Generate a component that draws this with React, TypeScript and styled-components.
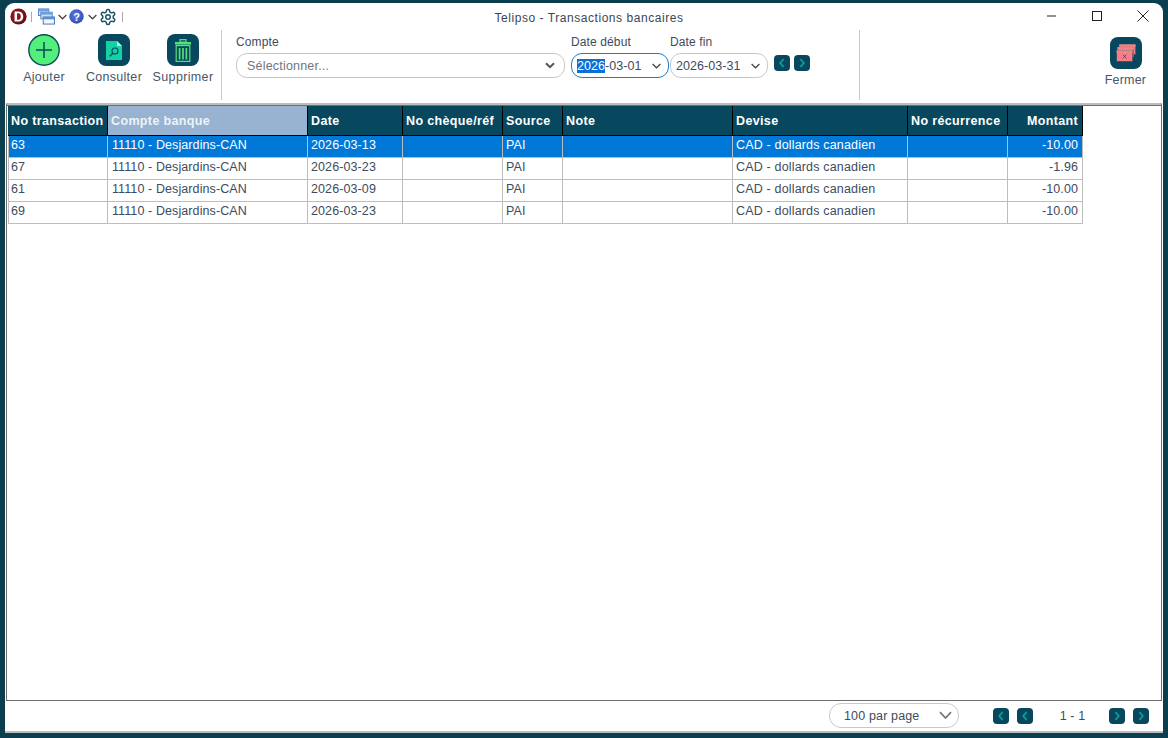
import React from "react";
import styled, { createGlobalStyle } from "styled-components";

const Global = createGlobalStyle`
  html, body { margin: 0; padding: 0; width: 100%; height: 100%; overflow: hidden; background: #0b3f50; }
  #root { width: 100%; height: 100%; }
  * { box-sizing: border-box; }
`;

const Frame = styled.div`
  width: 1168px;
  height: 738px;
  padding: 3px 5px 5px 5px;
  background: #0b3f50;
  font-family: "Liberation Sans", Arial, sans-serif;
`;
const Win = styled.div`
  width: 1158px;
  height: 730px;
  background: #fff;
  border-radius: 9px 9px 0 0;
  display: flex;
  flex-direction: column;
  position: relative;
`;
const TitleBar = styled.div`
  height: 23px;
  display: flex;
  align-items: center;
  padding: 4px 0 0 5px;
  position: relative;
`;
const QuickIcons = styled.div`
  display: flex;
  align-items: center;
  height: 19px;
`;
const Sep = styled.span`
  width: 1px;
  height: 10px;
  background: #a9a9a9;
  display: block;
`;
const Title = styled.div`
  position: absolute;
  left: 0;
  right: 0;
  top: 7px;
  padding-left: 10px;
  text-align: center;
  font-size: 12px;
  line-height: 16px;
  letter-spacing: 0.55px;
  color: #3b4658;
`;
const WinControls = styled.div`
  position: absolute;
  right: -2px;
  top: 0;
  display: flex;
`;
const WinBtn = styled.div`
  width: 45px;
  height: 26px;
  display: flex;
  align-items: center;
  justify-content: center;
`;
const WinCloseBtn = styled(WinBtn)`
  width: 46px;
  padding-left: 1px;
`;
const Toolbar = styled.div`
  height: 77px;
  display: flex;
  align-items: flex-start;
`;
const ActionGroup = styled.div`
  width: 217px;
  height: 70px;
  padding: 4px 0 0 4px;
  border-right: 1px solid #c8c8c8;
  display: flex;
  margin-top: 4px;
`;
const Action = styled.div<{ $w: number }>`
  width: ${(p) => p.$w}px;
  display: flex;
  flex-direction: column;
  align-items: center;
  font-size: 12.5px;
  line-height: 15px;
  letter-spacing: 0.3px;
  color: #4a5568;
  gap: 4px;
`;
const WideAction = styled(Action)`
  letter-spacing: 0.35px;
  padding-right: 2px;
`;
const Tile = styled.div`
  width: 32px;
  height: 32px;
  border-radius: 8px;
  background: #07485f;
  display: flex;
  align-items: center;
  justify-content: center;
`;
const Filters = styled.div`
  width: 638px;
  height: 70px;
  margin-top: 4px;
  padding: 4px 0 0 14px;
  border-right: 1px solid #c8c8c8;
  display: flex;
  align-items: flex-start;
`;
const Field = styled.div<{ $w: number }>`
  width: ${(p) => p.$w}px;
  display: flex;
  flex-direction: column;
`;
const FieldLabel = styled.div`
  height: 17px;
  font-size: 12px;
  line-height: 17px;
  letter-spacing: 0.12px;
  color: #404b60;
`;
const Select = styled.div<{ $focus?: boolean; $w: number }>`
  margin-top: 2px;
  width: ${(p) => p.$w}px;
  height: 25px;
  border-radius: 11px;
  border: 1px solid ${(p) => (p.$focus ? "#1a7fd4" : "#c8c8c8")};
  background: #fff;
  display: flex;
  align-items: center;
  justify-content: space-between;
  font-size: 12.5px;
  letter-spacing: 0.05px;
  color: #404b60;
`;
const Placeholder = styled.span`
  padding-left: 10px;
  letter-spacing: 0.2px;
  color: #6f7680;
`;
const DateText = styled.span`
  padding-left: 5px;
`;
const Selected = styled.span`
  background: #0a6fd6;
  color: #fff;
`;
const ChevBox = styled.span<{ $r: number }>`
  display: flex;
  padding-right: ${(p) => p.$r}px;
`;
const Stepper = styled.div`
  display: flex;
  gap: 4px;
  margin: 21px 0 0 6px;
`;
const NavBtn = styled.div`
  width: 16px;
  height: 16px;
  border-radius: 4px;
  background: #07485f;
  display: flex;
  align-items: center;
  justify-content: center;
`;
const Spacer = styled.div`
  flex: 1;
`;
const CloseAction = styled(Action)`
  margin: 11px 0 0 0;
  padding-right: 5px;
  letter-spacing: 0.2px;
  & > :last-child { margin-right: 0; }
`;
const CloseLabel = styled.span`
  margin-right: 2px;
`;
const GridArea = styled.div`
  flex: 1;
  min-height: 0;
  border-top: 2px solid #bdbdbd;
  border-bottom: 1px solid #6f6f6f;
  border-left: 1px solid #6f6f6f;
  border-right: 1px solid #6f6f6f;
  margin: 0 1px 0 1px;
  padding: 1px 0 0 1px;
  box-shadow: inset 0 1px 0 #6f6f6f;
`;
const Table = styled.div`
  display: grid;
  grid-template-columns: 100px 200px 95px 100px 60px 170px 175px 100px 75px;
  grid-auto-rows: 22px;
  grid-template-rows: 30px;
  width: 1075px;
`;
const Head = styled.div<{ $active?: boolean; $right?: boolean }>`
  background: ${(p) => (p.$active ? "#97b3d1" : "#07485f")};
  color: ${(p) => (p.$active ? "#eef2f7" : "#fff")};
  border-right: 1px solid #000;
  border-bottom: 1px solid #000;
  font-size: 12.5px;
  font-weight: bold;
  letter-spacing: 0.36px;
  line-height: 30px;
  padding: 0 4px 0 3px;
  white-space: nowrap;
  overflow: hidden;
  text-align: ${(p) => (p.$right ? "right" : "left")};
`;
const Cell = styled.div<{ $sel?: boolean; $right?: boolean }>`
  background: ${(p) => (p.$sel ? "#0078d7" : "#fff")};
  color: ${(p) => (p.$sel ? "#fff" : "#404b60")};
  border-right: 1px solid #bdbdbd;
  border-bottom: 1px solid #bdbdbd;
  font-size: 12.5px;
  letter-spacing: 0.1px;
  line-height: 19px;
  padding: 0 4px 0 4px;
  white-space: nowrap;
  overflow: hidden;
  text-align: ${(p) => (p.$right ? "right" : "left")};
`;
const PlainCell = styled(Cell)`
  padding-left: 3px;
`;
const DeviseCell = styled(PlainCell)`
  letter-spacing: 0.17px;
`;
const FirstCell = styled(Cell)`
  border-left: 1px solid #bdbdbd;
  padding-left: 2px;
`;
const Footer = styled.div`
  height: 32px;
  display: flex;
  align-items: center;
  justify-content: flex-end;
  padding: 0 14px 1px 0;
  font-size: 12.5px;
  color: #404b60;
  border-bottom: 2px solid #bdbdbd;
`;
const PageSize = styled.div`
  width: 130px;
  height: 25px;
  border: 1px solid #c8c8c8;
  border-radius: 12px;
  display: flex;
  align-items: center;
  justify-content: space-between;
  padding: 0 6px 0 14px;
  letter-spacing: 0.15px;
  margin-right: 34px;
`;
const PagerGroup = styled.div`
  display: flex;
  gap: 8px;
`;
const PageLabel = styled.div`
  width: 76px;
  padding-left: 3px;
  text-align: center;
  letter-spacing: 0.1px;
`;

const ChevLeft = () => (
  <svg width="10" height="10" viewBox="0 0 10 10" fill="none">
    <path d="M6.6 1.2 L3.2 5 L6.6 8.8" stroke="#0f9a92" strokeWidth="1.8" />
  </svg>
);
const ChevRight = () => (
  <svg width="10" height="10" viewBox="0 0 10 10" fill="none">
    <path d="M3.4 1.2 L6.8 5 L3.4 8.8" stroke="#0f9a92" strokeWidth="1.8" />
  </svg>
);
const DownThin = () => (
  <svg width="9" height="6" viewBox="0 0 9 6" fill="none">
    <path d="M0.6 1 L4.5 4.8 L8.4 1" stroke="#444" strokeWidth="1.2" />
  </svg>
);
const DownBold = () => (
  <svg width="10" height="7" viewBox="0 0 10 7" fill="none">
    <path d="M1 1.2 L5 5.2 L9 1.2" stroke="#555" strokeWidth="2" />
  </svg>
);
const DownWide = () => (
  <svg width="13" height="9" viewBox="0 0 13 9" fill="none">
    <path d="M1 1.2 L6.5 7 L12 1.2" stroke="#777" strokeWidth="1.8" />
  </svg>
);

const LogoIcon = () => (
  <svg width="17" height="17" viewBox="0 0 18 18" style={{ marginRight: 4 }}>
    <defs>
      <radialGradient id="logoFill" cx="0.4" cy="0.4" r="0.7">
        <stop offset="0" stopColor="#a51622" />
        <stop offset="1" stopColor="#5c0c14" />
      </radialGradient>
    </defs>
    <circle cx="9" cy="9" r="8.6" fill="url(#logoFill)" />
    <path d="M4.8 3.6 H9 C12.8 3.6 14 6.6 14 9 C14 11.4 12.8 14.4 9 14.4 H4.8 Z M7.4 5.6 V12.4 H8.9 C10.8 12.4 11.4 10.6 11.4 9 C11.4 7.4 10.8 5.6 8.9 5.6 Z" fill="#fff" fillRule="evenodd" />
  </svg>
);
const WindowsIcon = () => (
  <svg width="17" height="17" viewBox="0 0 18 17" style={{ margin: "0 3px 0 6px" }}>
    <rect x="0.5" y="0.5" width="11" height="7" fill="#cfe0f6" stroke="#4f83c8" />
    <rect x="0.5" y="0.5" width="11" height="2.5" fill="#6f9edb" />
    <rect x="3" y="4" width="12" height="7" fill="#cfe0f6" stroke="#4f83c8" />
    <rect x="3" y="4" width="12" height="2.5" fill="#6f9edb" />
    <rect x="5.5" y="9" width="12" height="7.5" fill="#f2f6fc" stroke="#3f73bd" />
    <rect x="5.5" y="9" width="12" height="2.5" fill="#5a8fd6" />
  </svg>
);
const HelpIcon = () => (
  <svg width="15" height="15" viewBox="0 0 15 15" style={{ margin: "0 4px 0 2px" }}>
    <defs>
      <radialGradient id="helpFill" cx="0.45" cy="0.4" r="0.7">
        <stop offset="0" stopColor="#5b80e6" />
        <stop offset="1" stopColor="#2a44a8" />
      </radialGradient>
    </defs>
    <circle cx="7.5" cy="7.5" r="7.2" fill="url(#helpFill)" />
    <text x="7.5" y="11.5" textAnchor="middle" fontSize="11" fontWeight="bold" fill="#fff" fontFamily="Liberation Sans">?</text>
  </svg>
);
const Gear = () => (
  <svg width="18" height="18" viewBox="0 0 24 24" fill="none" stroke="#1a5266" strokeWidth="2" strokeLinecap="round" strokeLinejoin="round" style={{ margin: "0 5px 0 2px" }}>
    <path d="M12.22 2h-.44a2 2 0 0 0-2 2v.18a2 2 0 0 1-1 1.73l-.43.25a2 2 0 0 1-2 0l-.15-.08a2 2 0 0 0-2.73.73l-.22.38a2 2 0 0 0 .73 2.73l.15.1a2 2 0 0 1 1 1.72v.51a2 2 0 0 1-1 1.74l-.15.09a2 2 0 0 0-.73 2.73l.22.38a2 2 0 0 0 2.73.73l.15-.08a2 2 0 0 1 2 0l.43.25a2 2 0 0 1 1 1.73V20a2 2 0 0 0 2 2h.44a2 2 0 0 0 2-2v-.18a2 2 0 0 1 1-1.73l.43-.25a2 2 0 0 1 2 0l.15.08a2 2 0 0 0 2.73-.73l.22-.39a2 2 0 0 0-.73-2.73l-.15-.08a2 2 0 0 1-1-1.74v-.5a2 2 0 0 1 1-1.74l.15-.09a2 2 0 0 0 .73-2.73l-.22-.38a2 2 0 0 0-2.73-.73l-.15.08a2 2 0 0 1-2 0l-.43-.25a2 2 0 0 1-1-1.73V4a2 2 0 0 0-2-2z" />
    <circle cx="12" cy="12" r="3" />
  </svg>
);
const AddIcon = () => (
  <svg width="32" height="32" viewBox="0 0 32 32">
    <circle cx="16" cy="16" r="15.2" fill="#52ef7c" stroke="#0b4a5c" strokeWidth="1.4" />
    <path d="M16 8 V24 M8 16 H24" stroke="#0b4a5c" strokeWidth="1.5" />
  </svg>
);
const DocIcon = () => (
  <svg width="16" height="19" viewBox="0 0 16 19">
    <path d="M0 0 H11 L16 5 V19 H0 Z" fill="#12d1a5" />
    <path d="M11 0 L16 5 H11 Z" fill="#b8f3e3" />
    <circle cx="9" cy="10" r="3" fill="none" stroke="#07485f" strokeWidth="1.1" />
    <path d="M6.8 12.2 L3.8 15.2" stroke="#07485f" strokeWidth="1.3" />
  </svg>
);
const TrashIcon = () => (
  <svg width="16" height="23" viewBox="0 0 16 23">
    <path d="M5 0.6 H11 V3 H5 Z" fill="none" stroke="#52e07a" strokeWidth="1.2" />
    <rect x="0" y="3" width="16" height="2.6" fill="#52e07a" />
    <rect x="1.2" y="6.6" width="13.6" height="15.8" fill="none" stroke="#52e07a" strokeWidth="1.2" />
    <path d="M4.6 9 V20.4 M8 9 V20.4 M11.4 9 V20.4" stroke="#52e07a" strokeWidth="1.7" />
  </svg>
);
const CloseIcon = () => (
  <svg width="20" height="18" viewBox="0 0 22 20">
    <rect x="3.5" y="0.5" width="18" height="11" fill="#f9777f" stroke="#7a4a55" strokeWidth="0.6" />
    <rect x="3.5" y="0.5" width="18" height="2.5" fill="#e8888e" />
    <rect x="1.5" y="3.5" width="18" height="11" fill="#f9777f" stroke="#7a4a55" strokeWidth="0.6" />
    <rect x="1.5" y="3.5" width="18" height="2.5" fill="#e8888e" />
    <rect x="0.5" y="7" width="18" height="12.5" fill="#fb7c85" stroke="#07485f" strokeWidth="0.6" />
    <rect x="0.5" y="7" width="18" height="2.4" fill="#e8888e" />
    <path d="M7.5 11.8 L11.5 16 M11.5 11.8 L7.5 16" stroke="#4a4a5a" strokeWidth="1" />
  </svg>
);

const headers: { label: string; right?: boolean; active?: boolean }[] = [
  { label: "No transaction" },
  { label: "Compte banque", active: true },
  { label: "Date" },
  { label: "No chèque/réf" },
  { label: "Source" },
  { label: "Note" },
  { label: "Devise" },
  { label: "No récurrence" },
  { label: "Montant", right: true },
];
const rows = [
  ["63", "2026-03-13", "-10.00"],
  ["67", "2026-03-23", "-1.96"],
  ["61", "2026-03-09", "-10.00"],
  ["69", "2026-03-23", "-10.00"],
];

export default function App() {
  return (
    <Frame>
      <Global />
      <Win>
        <TitleBar>
          <QuickIcons>
            <LogoIcon />
            <Sep />
            <WindowsIcon />
            <DownThin />
            <HelpIcon />
            <DownThin />
            <Gear />
            <Sep />
          </QuickIcons>
          <Title>Telipso - Transactions bancaires</Title>
          <WinControls>
            <WinBtn>
              <svg width="9" height="2" viewBox="0 0 9 2"><path d="M0 1 H9" stroke="#222" /></svg>
            </WinBtn>
            <WinBtn>
              <svg width="10" height="10" viewBox="0 0 10 10"><rect x="0.5" y="0.5" width="9" height="9" fill="none" stroke="#222" /></svg>
            </WinBtn>
            <WinCloseBtn>
              <svg width="12" height="12" viewBox="0 0 12 12"><path d="M.5 .5 L11.5 11.5 M11.5 .5 L.5 11.5" stroke="#222" /></svg>
            </WinCloseBtn>
          </WinControls>
        </TitleBar>
        <Toolbar>
          <ActionGroup>
            <Action $w={70}><AddIcon /><span>Ajouter</span></Action>
            <Action $w={70}><Tile><DocIcon /></Tile><span>Consulter</span></Action>
            <WideAction $w={70}><Tile><TrashIcon /></Tile><span>Supprimer</span></WideAction>
          </ActionGroup>
          <Filters>
            <Field $w={335}>
              <FieldLabel>Compte</FieldLabel>
              <Select $w={329}>
                <Placeholder>Sélectionner...</Placeholder>
                <ChevBox $r={9}><DownBold /></ChevBox>
              </Select>
            </Field>
            <Field $w={99}>
              <FieldLabel>Date début</FieldLabel>
              <Select $w={98} $focus>
                <DateText><Selected>2026</Selected>-03-01</DateText>
                <ChevBox $r={7}><DownThin /></ChevBox>
              </Select>
            </Field>
            <Field $w={98}>
              <FieldLabel>Date fin</FieldLabel>
              <Select $w={98}>
                <DateText>2026-03-31</DateText>
                <ChevBox $r={7}><DownThin /></ChevBox>
              </Select>
            </Field>
            <Stepper>
              <NavBtn><ChevLeft /></NavBtn>
              <NavBtn><ChevRight /></NavBtn>
            </Stepper>
          </Filters>
          <Spacer />
          <CloseAction $w={70}><Tile><CloseIcon /></Tile><CloseLabel>Fermer</CloseLabel></CloseAction>
        </Toolbar>
        <GridArea>
          <Table>
            {headers.map((h) => (
              <Head key={h.label} $active={h.active} $right={h.right}>{h.label}</Head>
            ))}
            {rows.map((r, i) => {
              const sel = i === 0;
              return (
                <React.Fragment key={r[0]}>
                  <FirstCell $sel={sel}>{r[0]}</FirstCell>
                  <Cell $sel={sel}>11110 - Desjardins-CAN</Cell>
                  <PlainCell $sel={sel}>{r[1]}</PlainCell>
                  <Cell $sel={sel} />
                  <PlainCell $sel={sel}>PAI</PlainCell>
                  <Cell $sel={sel} />
                  <DeviseCell $sel={sel}>CAD - dollards canadien</DeviseCell>
                  <Cell $sel={sel} />
                  <Cell $sel={sel} $right>{r[2]}</Cell>
                </React.Fragment>
              );
            })}
          </Table>
        </GridArea>
        <Footer>
          <PageSize>100 par page<DownWide /></PageSize>
          <PagerGroup>
            <NavBtn><ChevLeft /></NavBtn>
            <NavBtn><ChevLeft /></NavBtn>
          </PagerGroup>
          <PageLabel>1 - 1</PageLabel>
          <PagerGroup>
            <NavBtn><ChevRight /></NavBtn>
            <NavBtn><ChevRight /></NavBtn>
          </PagerGroup>
        </Footer>
      </Win>
    </Frame>
  );
}
